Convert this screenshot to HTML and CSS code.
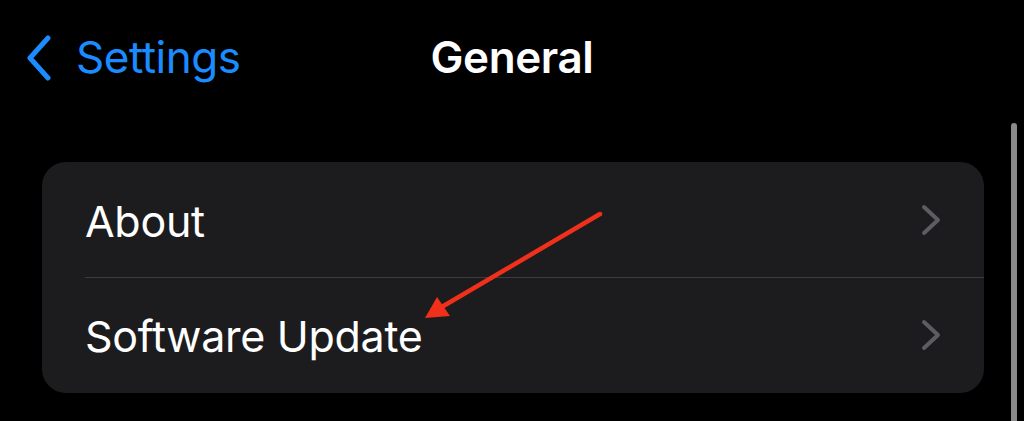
FILE: index.html
```html
<!DOCTYPE html>
<html lang="en">
<head>
    <meta charset="UTF-8">
    <title>General</title>
    <link rel="stylesheet" href="styles.css">
</head>
<body>
    <div class="navbar">
        <a class="back" href="#">
            <svg class="back-icon" width="26" height="46" viewBox="0 0 26 46">
                <polyline points="22,3 4,23 22,43" fill="none" stroke="#1a8cff" stroke-width="5" stroke-linecap="round" stroke-linejoin="round"/>
            </svg>
            <span>Settings</span>
        </a>
        <h1 class="title">General</h1>
    </div>

    <div class="group">
        <a class="row" href="#">
            <span class="label">About</span>
            <svg class="chevron" width="22" height="32" viewBox="0 0 22 32">
                <polyline points="4,3 18,16 4,29" fill="none" stroke="#5c5c61" stroke-width="4" stroke-linecap="round" stroke-linejoin="round"/>
            </svg>
        </a>
        <a class="row" href="#">
            <span class="label">Software Update</span>
            <svg class="chevron" width="22" height="32" viewBox="0 0 22 32">
                <polyline points="4,3 18,16 4,29" fill="none" stroke="#5c5c61" stroke-width="4" stroke-linecap="round" stroke-linejoin="round"/>
            </svg>
        </a>
    </div>

    <!-- red pointer drawn over the list -->
    <svg class="pointer" width="1024" height="421" viewBox="0 0 1024 421">
        <line x1="600" y1="214" x2="440" y2="308" stroke="#f0301a" stroke-width="4.5" stroke-linecap="round"/>
        <polygon points="425,318 437,297 450,316" fill="#f0301a"/>
    </svg>

    <div class="scrollbar"></div>
</body>
</html>
```

FILE: styles.css
```css
html, body {
    height: 421px;
    overflow: hidden;
}
body {
    margin: 0;
    background: #000;
    font-family: Inter, "Noto Sans", sans-serif;
    color: #fff;
    position: relative;
}
.navbar {
    position: relative;
    height: 162px;
}
.back {
    position: absolute;
    left: 26px;
    top: 32px;
    display: flex;
    align-items: center;
    gap: 24px;
    color: #1a8cff;
    text-decoration: none;
    font-size: 44px;
    letter-spacing: -0.5px;
}
.back span {
    margin-top: -2px;
}
.title {
    margin: 0;
    padding-top: 30px;
    text-align: center;
    font-size: 44px;
    font-weight: 600;
    letter-spacing: -0.4px;
}
.group {
    margin: 0 40px 0 42px;
    background: #1c1c1e;
    border-radius: 24px;
    overflow: hidden;
}
.row {
    display: flex;
    align-items: center;
    justify-content: space-between;
    height: 115px;
    padding: 0 42px 0 43px;
    color: #fff;
    text-decoration: none;
    font-size: 43px;
    letter-spacing: -0.3px;
}
.row + .row {
    height: 116px;
    box-shadow: inset 0 1px 0 #3d3d40;
    margin-left: 43px;
    padding-left: 0;
}
.label {
    margin-top: 2px;
}
.chevron {
    display: block;
}
.pointer {
    position: absolute;
    left: 0;
    top: 0;
}
.scrollbar {
    position: absolute;
    left: 1011px;
    top: 123px;
    width: 6px;
    height: 298px;
    border-radius: 3px 3px 0 0;
    background: #8b8b8b;
}
```
